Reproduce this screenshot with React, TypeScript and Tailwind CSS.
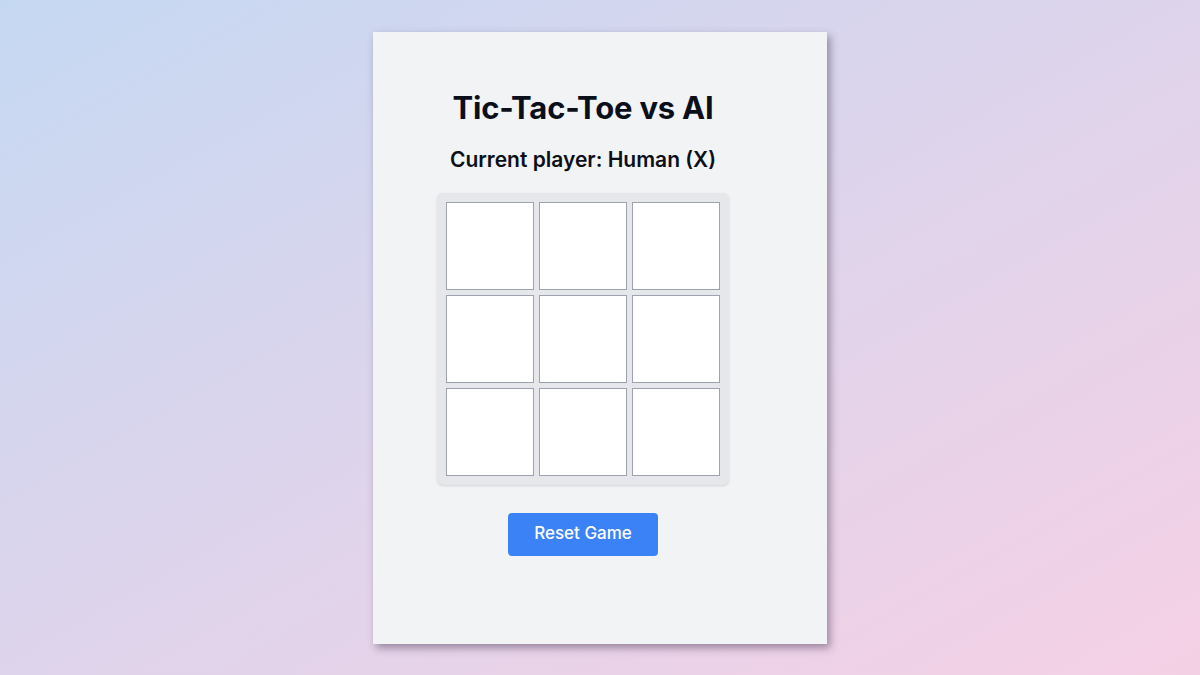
import React, { useState } from "react";

export default function App() {
  const [board, setBoard] = useState<(string | null)[]>(Array(9).fill(null));
  return (
    <div
      className="w-full h-[675px] flex items-center justify-center bg-gradient-to-br from-[#c5d8f2] to-[#f5d0e5]"
      style={{ fontFamily: "Inter, 'Noto Sans', sans-serif" }}
    >
      <div className="w-[454px] h-[612px] bg-[#f2f3f5] shadow-[3px_4px_8px_rgba(60,40,70,0.45)] pl-8 pr-[66px] pt-[56px] flex flex-col items-center">
        <h1 className="text-[31px] leading-[40px] font-bold text-[#0b0f1a] tracking-[-0.2px]">Tic-Tac-Toe vs AI</h1>
        <h2 className="mt-[18px] text-[21px] leading-[28px] font-semibold text-[#0b0f1a]">Current player: Human (X)</h2>
        <div className="mt-[19px] bg-[#e5e7eb] rounded-md p-[9px] grid grid-cols-3 gap-[5px] shadow-sm">
          {board.map((v, i) => (
            <button
              key={i}
              onClick={() => {
                const b = [...board];
                b[i] = b[i] ? null : "X";
                setBoard(b);
              }}
              className="w-[88px] h-[88px] bg-white border border-[#9ca3af] text-4xl font-bold"
            >
              {v}
            </button>
          ))}
        </div>
        <button
          onClick={() => setBoard(Array(9).fill(null))}
          className="mt-[28px] w-[150px] h-[43px] bg-[#3b82f6] text-white rounded text-[17px] font-medium"
        >
          Reset Game
        </button>
      </div>
    </div>
  );
}
